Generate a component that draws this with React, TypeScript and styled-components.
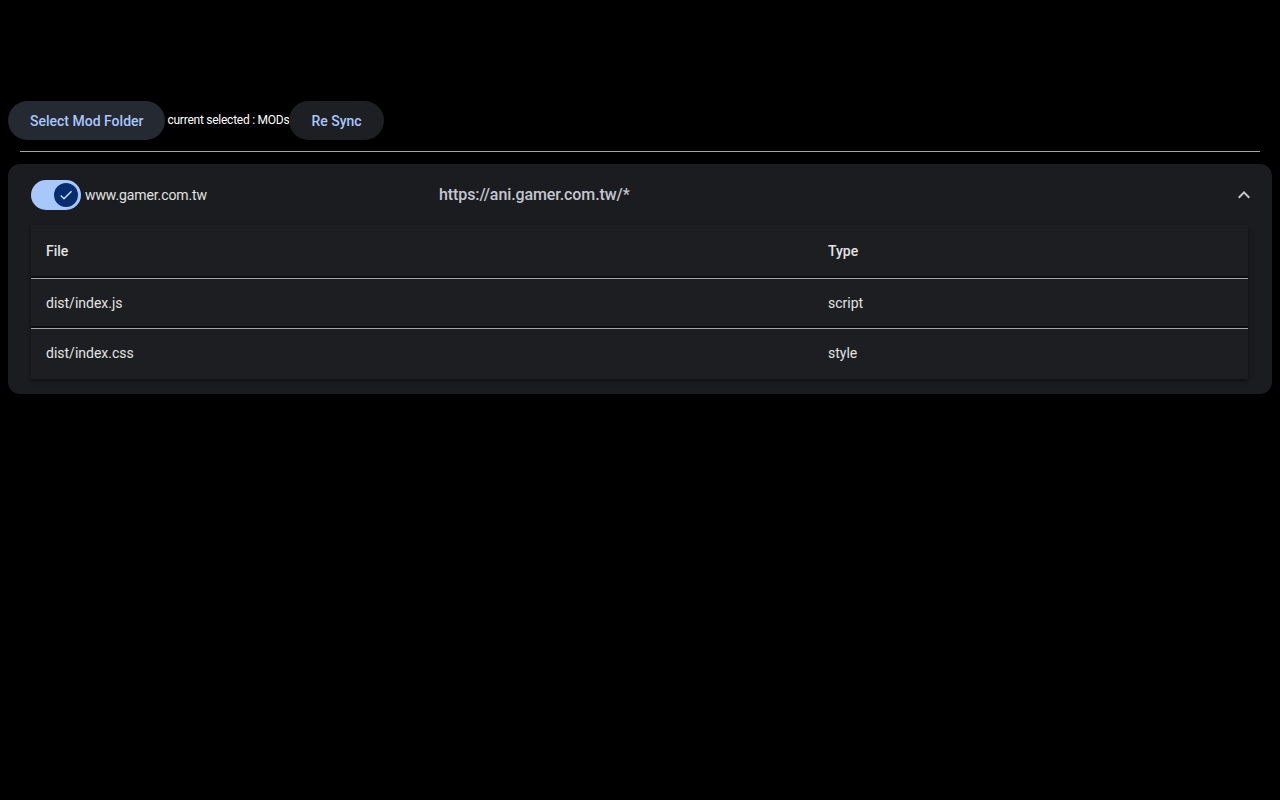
import React, { useState } from 'react';
import styled, { createGlobalStyle } from 'styled-components';

const GlobalStyle = createGlobalStyle`
  html, body {
    background: #000;
  }
  body {
    margin: 8px;
    font-family: Roboto, "Noto Sans", sans-serif;
    color: #e3e3e3;
  }
`;

const files = [
  { file: 'dist/index.js', type: 'script' },
  { file: 'dist/index.css', type: 'style' },
];

function App() {
  const [enabled, setEnabled] = useState(true);
  const [open, setOpen] = useState(true);

  return (
    <Page>
      <GlobalStyle />
      <Toolbar>
        <PillButton type="button" $focused>
          Select Mod Folder
        </PillButton>
        <Current>current selected : MODs</Current>
        <PillButton type="button">Re Sync</PillButton>
      </Toolbar>
      <Divider />
      <Card>
        <CardHeader>
          <Switch
            type="button"
            $on={enabled}
            onClick={() => setEnabled(!enabled)}
            aria-label="toggle mod"
          >
            <Thumb $on={enabled}>
              {enabled && (
                <svg width="16" height="16" viewBox="0 0 24 24">
                  <path
                    d="M9 16.2 4.8 12l-1.4 1.4L9 19 21 7l-1.4-1.4z"
                    fill="#d3e3fd"
                  />
                </svg>
              )}
            </Thumb>
          </Switch>
          <Domain>www.gamer.com.tw</Domain>
          <Match>https://ani.gamer.com.tw/*</Match>
          <Chevron type="button" onClick={() => setOpen(!open)} aria-label="collapse">
            <svg width="24" height="24" viewBox="0 0 24 24">
              <path
                d={open ? 'm12 8-6 6 1.41 1.41L12 10.83l4.59 4.58L18 14z' : 'M16.59 8.59 12 13.17 7.41 8.59 6 10l6 6 6-6z'}
                fill="#c4c7c5"
              />
            </svg>
          </Chevron>
        </CardHeader>
        {open && (
          <TableWrap>
            <Table>
              <thead>
                <tr>
                  <HeadCell $wide>File</HeadCell>
                  <HeadCell>Type</HeadCell>
                </tr>
              </thead>
              <tbody>
                {files.map(f => (
                  <tr key={f.file}>
                    <Cell>{f.file}</Cell>
                    <Cell>{f.type}</Cell>
                  </tr>
                ))}
              </tbody>
            </Table>
          </TableWrap>
        )}
      </Card>
    </Page>
  );
}

export default App;

const Page = styled.div`
  padding-top: 93px;
`;

const Toolbar = styled.div`
  display: flex;
  align-items: center;
`;

const PillButton = styled.button<{ $focused?: boolean }>`
  height: 39px;
  padding: 0 22px;
  border: none;
  border-radius: 20px;
  background: ${p => (p.$focused ? '#252932' : '#1e1f23')};
  color: #a8c7fa;
  font-family: Roboto, sans-serif;
  font-size: 14px;
  font-weight: 500;
  letter-spacing: 0;
  cursor: pointer;
`;

const Current = styled.span`
  font-size: 12px;
  letter-spacing: -0.25px;
  color: #fff;
  padding: 0 0 2px 2px;
`;

const Divider = styled.hr`
  margin: 11px 12px 12px;
  border: none;
  border-top: 1px solid #a5a5a8;
`;

const Card = styled.div`
  background: #1b1c20;
  border-radius: 12px;
  padding: 0 23px 15px;
`;

const CardHeader = styled.div`
  display: flex;
  align-items: center;
  height: 61px;
`;

const Switch = styled.button<{ $on: boolean }>`
  position: relative;
  width: 50px;
  height: 30px;
  padding: 0;
  border: none;
  border-radius: 15px;
  background: ${p => (p.$on ? '#a8c7fa' : '#44474e')};
  cursor: pointer;
  flex: none;
`;

const Thumb = styled.span<{ $on: boolean }>`
  position: absolute;
  top: 3px;
  left: ${p => (p.$on ? '23px' : '3px')};
  width: 24px;
  height: 24px;
  border-radius: 50%;
  background: ${p => (p.$on ? '#062e6f' : '#8e918f')};
  display: flex;
  align-items: center;
  justify-content: center;
`;

const Domain = styled.span`
  margin-left: 4px;
  width: 354px;
  font-size: 14px;
  letter-spacing: -0.1px;
  color: #e3e3e3;
`;

const Match = styled.span`
  flex: 1;
  font-size: 16px;
  font-weight: 500;
  letter-spacing: -0.1px;
  color: #c4c7cf;
`;

const Chevron = styled.button`
  width: 24px;
  height: 24px;
  padding: 0;
  margin-right: -7px;
  border: none;
  background: transparent;
  display: flex;
  cursor: pointer;
`;

const TableWrap = styled.div`
  background: #1d1e22;
  box-shadow: 0 2px 4px rgba(0, 0, 0, 0.45);
  margin-right: 1px;
`;

const Table = styled.table`
  width: 100%;
  table-layout: fixed;
  border-collapse: collapse;
  font-size: 14px;
  color: #e3e3e3;
`;

const HeadCell = styled.th<{ $wide?: boolean }>`
  box-sizing: border-box;
  text-align: left;
  font-weight: 500;
  height: 53px;
  padding: 0 15px;
  width: ${p => (p.$wide ? '782px' : 'auto')};
  border-bottom: 1px solid #a0a2a8;
  box-shadow: inset 0 -2px 0 #0e0f11;
`;

const Cell = styled.td`
  height: 49px;
  padding: 0 15px;
  border-bottom: 1px solid #a0a2a8;
  box-shadow: inset 0 -2px 0 #0e0f11;
  tr:last-child > & {
    border-bottom-color: #1d1e22;
    box-shadow: none;
  }
`;
